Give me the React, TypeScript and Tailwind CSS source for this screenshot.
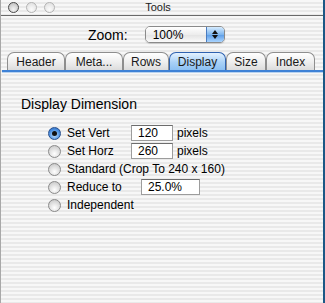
import React from "react";

const stripes =
  "bg-[image:repeating-linear-gradient(180deg,#f7f7f7_0px,#f7f7f7_2px,#e9e9e9_2px,#e9e9e9_4px)]";

function Light({ dark }: { dark?: boolean }) {
  return (
    <div
      className={
        dark
          ? "w-[11px] h-[11px] rounded-full border-[1.5px] border-[#4a4a4a] bg-[radial-gradient(circle_at_50%_70%,#f4f4f4,#b8b8b8)]"
          : "w-[11px] h-[11px] rounded-full border border-[#b4b4b4] bg-[radial-gradient(circle_at_50%_70%,#fbfbfb,#dcdcdc)]"
      }
    />
  );
}

function Radio({ on }: { on?: boolean }) {
  return on ? (
    <div className="w-[13px] h-[13px] rounded-full border border-[#27508f] bg-[radial-gradient(circle_at_50%_65%,#bfe0ff,#4b8fe0_60%,#2b65b8)] flex items-center justify-center shrink-0">
      <div className="w-[5px] h-[5px] rounded-full bg-[#111]" />
    </div>
  ) : (
    <div className="w-[13px] h-[13px] rounded-full border border-[#8a8a8a] bg-[radial-gradient(circle_at_50%_70%,#ffffff,#d4d4d4_70%,#b8b8b8)] shrink-0" />
  );
}

function Field({ value, w }: { value: string; w: string }) {
  return (
    <div
      className={`${w} h-[16px] bg-white border border-[#9c9c9c] border-t-[#6c6c6c] flex items-center pl-[6px] text-[12px] text-black leading-none`}
    >
      {value}
    </div>
  );
}

const tabs = [
  { label: "Header", w: "w-[58px]" },
  { label: "Meta...", w: "w-[58px]" },
  { label: "Rows", w: "w-[46px]" },
  { label: "Display", w: "w-[57px]", on: true },
  { label: "Size", w: "w-[40px]" },
  { label: "Index", w: "w-[49px]" },
];

export default function App() {
  return (
    <div
      className="w-[325px] h-[303px] flex overflow-hidden text-black"
      style={{ fontFamily: '"Liberation Sans", Arial, sans-serif' }}
    >
      <div className={`w-[323px] h-full flex flex-col ${stripes} border-l border-[#a8a8a8]`}>
        {/* title bar */}
        <div className="h-[16px] border-b border-[#6a6a6a] grid grid-cols-[1fr_auto_1fr] items-center">
          <div className="flex items-center gap-[7px] pl-[7px]">
            <Light dark />
            <Light />
            <Light />
          </div>
          <div className="text-[11px] leading-none text-[#222] pr-[8px]">Tools</div>
          <div />
        </div>

        {/* zoom row */}
        <div className="mt-[10px] h-[17px] flex items-center pl-[87px]">
          <span className="text-[14px] leading-none">Zoom:</span>
          <div className="ml-[17px] w-[80px] h-[17px] flex rounded-[5px] border border-[#8a8a8a] overflow-hidden shadow-[0_1px_1px_rgba(0,0,0,0.15)]">
            <div className="flex-1 bg-[linear-gradient(180deg,#ffffff,#ededed_50%,#e2e2e2_51%,#fafafa)] flex items-center pl-[7px] text-[12px] leading-none">
              100%
            </div>
            <div className="w-[18px] border-l border-[#4a7cc0] bg-[linear-gradient(180deg,#d6ecff,#7fb6ee_50%,#5a9be6_51%,#a9d4ff)] flex flex-col items-center justify-center gap-[1px]">
              <svg width="6" height="4" viewBox="0 0 6 4">
                <path d="M0 4 L3 0 L6 4 Z" fill="#111" />
              </svg>
              <svg width="6" height="4" viewBox="0 0 6 4">
                <path d="M0 0 L3 4 L6 0 Z" fill="#111" />
              </svg>
            </div>
          </div>
        </div>

        {/* tabs */}
        <div className="mt-[9px] h-[18px] flex items-end pl-[6px]">
          {tabs.map((t) => (
            <div
              key={t.label}
              className={`${t.w} h-[18px] rounded-t-[7px] border border-b-0 flex items-center justify-center text-[12px] leading-none text-[#1a1a1a] ${
                t.on
                  ? "border-[#2f62b0] bg-[linear-gradient(180deg,#e4f2ff,#a9d1f7_55%,#8cc0f2)]"
                  : "border-[#8e8e8e] bg-[linear-gradient(180deg,#ffffff,#eeeeee_55%,#dcdcdc)]"
              }`}
            >
              {t.label}
            </div>
          ))}
        </div>
        <div className="ml-[1px] h-[2px] bg-[#3f82d6]" />
        <div className="ml-[1px] h-[1px] bg-[#b9d3f0]" />

        {/* content */}
        <div className="pl-[20px] mt-[23px] text-[14px] leading-[17px]">Display Dimension</div>

        <div className="mt-[11px] pl-[47px] flex flex-col text-[12px] leading-none">
          <div className="h-[18px] flex items-center">
            <Radio on />
            <span className="ml-[6px] w-[64px]">Set Vert</span>
            <Field value="120" w="w-[42px]" />
            <span className="ml-[4px]">pixels</span>
          </div>
          <div className="h-[18px] flex items-center">
            <Radio />
            <span className="ml-[6px] w-[64px]">Set Horz</span>
            <Field value="260" w="w-[42px]" />
            <span className="ml-[4px]">pixels</span>
          </div>
          <div className="h-[18px] flex items-center">
            <Radio />
            <span className="ml-[6px]">Standard (Crop To 240 x 160)</span>
          </div>
          <div className="h-[18px] flex items-center">
            <Radio />
            <span className="ml-[6px] w-[74px]">Reduce to</span>
            <Field value="25.0%" w="w-[59px]" />
          </div>
          <div className="h-[18px] flex items-center">
            <Radio />
            <span className="ml-[6px]">Independent</span>
          </div>
        </div>
      </div>
      <div className="w-[2px] h-full bg-[#1c5886]" />
    </div>
  );
}
